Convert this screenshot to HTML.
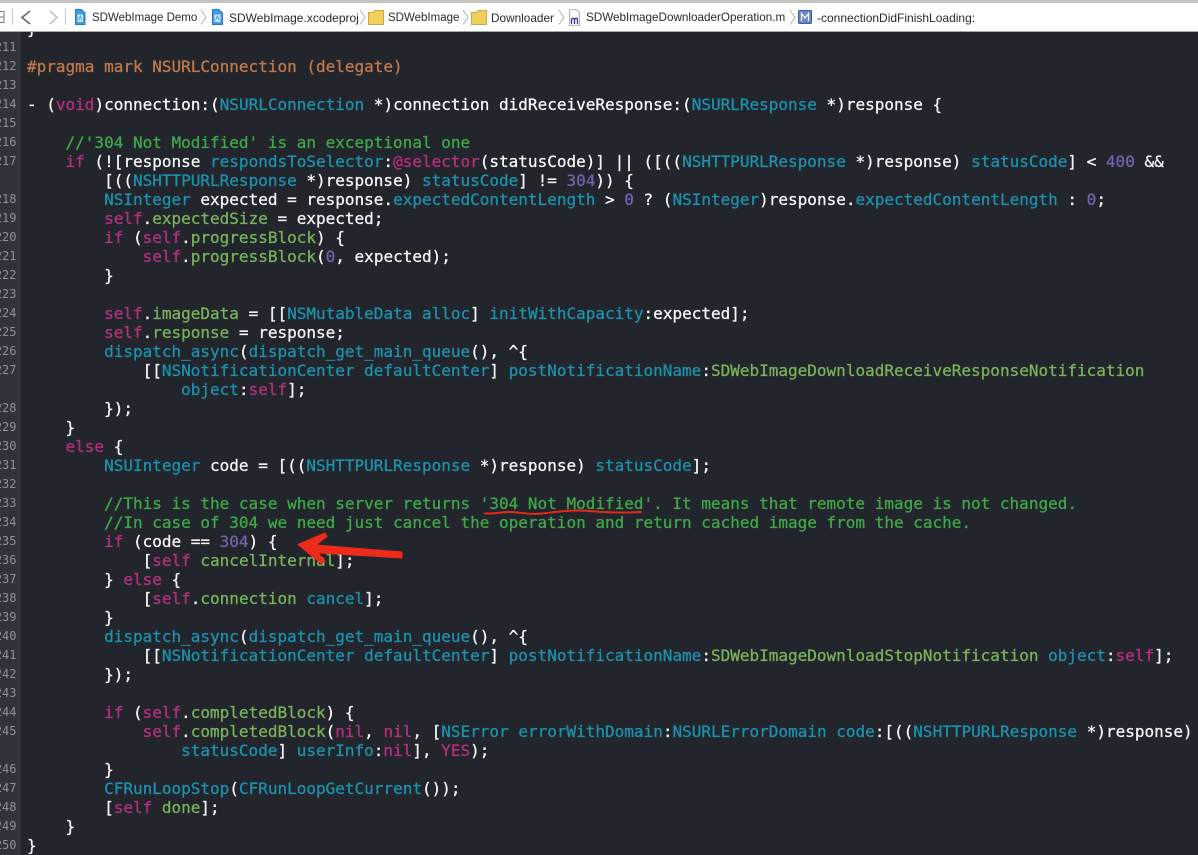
<!DOCTYPE html>
<html><head><meta charset="utf-8">
<style>
html,body{margin:0;padding:0;background:#22242b}
#w{position:relative;width:1198px;height:855px;overflow:hidden;background:#23252c}
#g{position:absolute;left:0;top:31px;width:21px;height:824px;background:#30333a}
#b{position:absolute;left:0;top:0;width:1198px;height:32px;background:#fff;border-bottom:1px solid #a8a8a8;box-sizing:border-box;border-top:3px solid #c4c4c4}
.bt{position:absolute;top:7px;font:11.5px/16px "Liberation Sans",sans-serif;color:#2a2a2a;white-space:pre;letter-spacing:0}
#b svg{position:absolute;left:0;top:-3px}
pre{margin:0;position:absolute;font-family:"DejaVu Sans Mono","Liberation Mono",monospace}
#c{left:27px;top:19px;font-size:16px;line-height:19px;color:#f4f4f4;-webkit-text-stroke:.3px;filter:blur(.3px)}
#n{left:0;top:19px;width:16.500px;direction:rtl;text-align:right;font-size:12px;line-height:19px;color:#8f9195;overflow:hidden;filter:blur(.3px)}
i{font-style:normal}
.k{color:#b5307f}.t{color:#1c92ad}.g{color:#78b35a}.c{color:#3fa848}.d{color:#7464b0}.p{color:#c2794a}
#a{position:absolute;left:0;top:0}
</style></head><body><div id="w">
<div id="g"></div>
<pre id="n">

211
212
213
214
215
216
217

218
219
220
221
222
223
224
225
226
227

228
229
230
231
232
233
234
235
236
237
238
239
240
241
242
243
244
245

246
247
248
249
250</pre>
<pre id="c">}

<i class="p">#pragma mark NSURLConnection (delegate)</i>

- (<i class="k">void</i>)connection:(<i class="t">NSURLConnection</i> *)connection didReceiveResponse:(<i class="t">NSURLResponse</i> *)response {

    <i class="c">//'304 Not Modified' is an exceptional one</i>
    <i class="k">if</i> (![response <i class="t">respondsToSelector</i>:<i class="k">@selector</i>(statusCode)] || ([((<i class="t">NSHTTPURLResponse</i> *)response) <i class="t">statusCode</i>] &lt; <i class="d">400</i> &amp;&amp;
        [((<i class="t">NSHTTPURLResponse</i> *)response) <i class="t">statusCode</i>] != <i class="d">304</i>)) {
        <i class="t">NSInteger</i> expected = response.<i class="t">expectedContentLength</i> &gt; <i class="d">0</i> ? (<i class="t">NSInteger</i>)response.<i class="t">expectedContentLength</i> : <i class="d">0</i>;
        <i class="k">self</i>.<i class="g">expectedSize</i> = expected;
        <i class="k">if</i> (<i class="k">self</i>.<i class="g">progressBlock</i>) {
            <i class="k">self</i>.<i class="g">progressBlock</i>(<i class="d">0</i>, expected);
        }

        <i class="k">self</i>.<i class="g">imageData</i> = [[<i class="t">NSMutableData</i> <i class="t">alloc</i>] <i class="t">initWithCapacity</i>:expected];
        <i class="k">self</i>.<i class="g">response</i> = response;
        <i class="t">dispatch_async</i>(<i class="t">dispatch_get_main_queue</i>(), ^{
            [[<i class="t">NSNotificationCenter</i> <i class="t">defaultCenter</i>] <i class="t">postNotificationName</i>:<i class="g">SDWebImageDownloadReceiveResponseNotification</i>
                <i class="t">object</i>:<i class="k">self</i>];
        });
    }
    <i class="k">else</i> {
        <i class="t">NSUInteger</i> code = [((<i class="t">NSHTTPURLResponse</i> *)response) <i class="t">statusCode</i>];

        <i class="c">//This is the case when server returns '304 Not Modified'. It means that remote image is not changed.</i>
        <i class="c">//In case of 304 we need just cancel the operation and return cached image from the cache.</i>
        <i class="k">if</i> (code == <i class="d">304</i>) {
            [<i class="k">self</i> <i class="g">cancelInternal</i>];
        } <i class="k">else</i> {
            [<i class="k">self</i>.<i class="g">connection</i> <i class="t">cancel</i>];
        }
        <i class="t">dispatch_async</i>(<i class="t">dispatch_get_main_queue</i>(), ^{
            [[<i class="t">NSNotificationCenter</i> <i class="t">defaultCenter</i>] <i class="t">postNotificationName</i>:<i class="g">SDWebImageDownloadStopNotification</i> <i class="t">object</i>:<i class="k">self</i>];
        });

        <i class="k">if</i> (<i class="k">self</i>.<i class="g">completedBlock</i>) {
            <i class="k">self</i>.<i class="g">completedBlock</i>(<i class="k">nil</i>, <i class="k">nil</i>, [<i class="t">NSError</i> <i class="t">errorWithDomain</i>:<i class="t">NSURLErrorDomain</i> <i class="t">code</i>:[((<i class="t">NSHTTPURLResponse</i> *)response)
                <i class="t">statusCode</i>] <i class="t">userInfo</i>:<i class="k">nil</i>], <i class="k">YES</i>);
        }
        <i class="t">CFRunLoopStop</i>(<i class="t">CFRunLoopGetCurrent</i>());
        [<i class="k">self</i> <i class="g">done</i>];
    }
}</pre>
<div id="b">
<svg width="1198" height="32" viewBox="0 0 1198 32" fill="none">
<path d="M-3 11.500H4V22.500H-3M-3 17H4" stroke="#777"/>
<path d="M12.500 9V25M65.500 9V25" stroke="#c9c9c9"/>
<path d="M30 11L22 17.500L30 24" stroke="#666" stroke-width="1.600"/>
<path d="M50 11L57 17.500L50 24" stroke="#b5b5b5" stroke-width="1.300"/>
<path d="M75.500 9.500H81.500L85 13V24.500H75.500Z" fill="#3f9be8" stroke="#2c79c4"/><path d="M77.500 14.500H83V22H77.500Z" fill="#d6ebfb"/><path d="M78.500 20.500L80.200 16L82 20.500" stroke="#3f9be8"/>
<path d="M212.500 9.500H219L222.500 13V24.500H212.500Z" fill="#3f9be8" stroke="#2c79c4"/><path d="M214.500 14.500H220.500V22H214.500Z" fill="#d6ebfb"/><path d="M215.500 20.500L217.500 16L219.500 20.500" stroke="#3f9be8"/>
<path d="M201 10L206 17.500L201 24.500M360 10L365 17.500L360 24.500M463 10L468 17.500L463 24.500M559 10L564 17.500L559 24.500M790 10L795 17.500L790 24.500" stroke="#b0b0b0"/>
<path d="M368.500 12.500H373L375 10.500H383.500V24.500H368.500Z" fill="#f0cf5c" stroke="#c9a93c"/>
<path d="M471.500 12.500H476L478 10.500H486.500V24.500H471.500Z" fill="#f0cf5c" stroke="#c9a93c"/>
<path d="M569.500 9.500H576.500L579.500 12.500V25.500H569.500Z" fill="#fafafa" stroke="#b5b5b5"/>
<path d="M571.500 24V18.500M571.500 19.500C573 17.500 574.500 18 574.500 20V24M574.500 19.500C576 17.500 577.500 18 577.500 20V24" stroke="#3a2fa0" stroke-width="1.300"/>
<rect x="798.500" y="10.500" width="13" height="13" rx="1" fill="#6d86c6" stroke="#3f5aa3"/>
<path d="M801.500 21V13.500L805 18L808.500 13.500V21" stroke="#fff" stroke-width="1.200"/>
</svg>
<div class="bt" style="left:92px">SDWebImage Demo</div>
<div class="bt" style="left:229px;font-size:12px">SDWebImage.xcodeproj</div>
<div class="bt" style="left:388px">SDWebImage</div>
<div class="bt" style="left:491px;font-size:11.800px">Downloader</div>
<div class="bt" style="left:586px;font-size:11.700px">SDWebImageDownloaderOperation.m</div>
<div class="bt" style="left:817px;font-size:12px">-connectionDidFinishLoading:</div>
</div>
<svg id="a" width="1198" height="855" viewBox="0 0 1198 855" fill="none">
<path d="M485 513.500C495 514 503 511.500 512 512C522 512.500 530 515 542 513.500C556 512 568 510 580 510.500C595 511 605 513.500 641 512" stroke="#e8281a" stroke-width="2" stroke-linecap="round"/>
<path d="M298 544.500L325 533L327 536.500L316 545L402 552V558L318 553L325 561L321 563.500Z" fill="#ee2a1a" stroke="#ee2a1a" stroke-width="1" stroke-linejoin="round"/>
</svg>
</div></body></html>
